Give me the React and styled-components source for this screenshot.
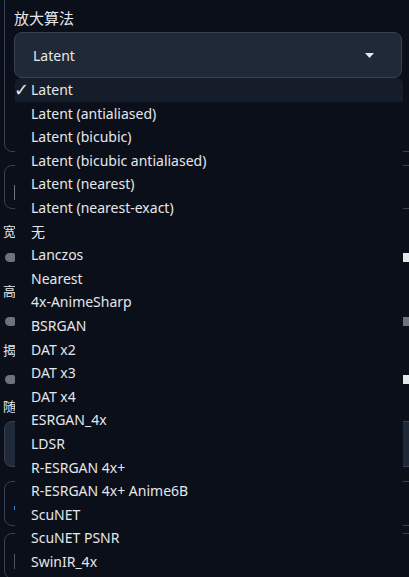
import React from "react";
import styled, { createGlobalStyle } from "styled-components";

const GlobalStyle = createGlobalStyle`
  html, body {
    margin: 0;
    padding: 0;
    background: #0b0f19;
  }
  body {
    font-family: "Noto Sans", "Noto Sans CJK SC", sans-serif;
  }
`;

const Page = styled.div`
  position: relative;
  width: 409px;
  height: 577px;
  overflow: hidden;
  background: #0b0f19;
  color: #e5e7eb;
  font-family: "Noto Sans", "Noto Sans CJK SC", sans-serif;
`;

const Column = styled.div`
  width: 440px;
  padding-left: 4px;
  display: flex;
  flex-direction: column;
`;

const Panel = styled.div`
  margin-top: -12px;
  height: 164px;
  box-sizing: border-box;
  border: 1px solid #374151;
  border-radius: 8px;
  padding: 20px 0 0 9px;
`;

const Label = styled.div`
  font-family: "Noto Sans CJK SC", sans-serif;
  font-size: 15px;
  line-height: 18px;
  color: #e5e7eb;
  margin-bottom: 5px;
`;

const Select = styled.div`
  width: 388px;
  height: 46px;
  box-sizing: border-box;
  border: 1px solid #374151;
  border-radius: 8px;
  background: #1f2937;
  display: flex;
  align-items: center;
  justify-content: space-between;
  padding: 0 27px 0 18px;
  font-size: 14px;
  color: #e5e7eb;
`;

const Caret = styled.svg`
  width: 9px;
  height: 5px;
`;

const Box = styled.div`
  height: ${(p) => p.h}px;
  margin-top: ${(p) => p.mt}px;
  box-sizing: border-box;
  border: 1px solid #374151;
  border-radius: 8px;
  background: ${(p) => (p.filled ? "#1f2937" : "transparent")};
  display: flex;
  align-items: center;
  padding-left: 9px;
`;

const Caretline = styled.div`
  width: 1px;
  height: 15px;
  margin-top: 10px;
  background: ${(p) => p.color};
`;

const Dot = styled.div`
  width: 2px;
  height: 4px;
  margin-top: 8px;
  background: #3b82f6;
`;

const RowLabel = styled.div`
  font-family: "Noto Sans CJK SC", sans-serif;
  font-size: 13px;
  line-height: 14px;
  height: 14px;
  color: #e5e7eb;
  margin-top: ${(p) => p.mt}px;
  margin-left: -1px;
`;

const SliderRow = styled.div`
  display: flex;
  align-items: center;
  justify-content: space-between;
  height: 10px;
  margin-top: ${(p) => p.mt}px;
  width: 409px;
`;

const Thumb = styled.div`
  width: 10px;
  height: 9px;
  margin-left: 1px;
  border-radius: 5px 2px 2px 5px;
  background: #6b7280;
`;

const NumBox = styled.div`
  width: 10px;
  height: 9px;
  background: ${(p) => p.color};
`;

const List = styled.ul`
  position: absolute;
  left: 15px;
  top: 78px;
  width: 388px;
  margin: 0;
  padding: 0;
  list-style: none;
  background: #0b0f19;
  border-radius: 6px 6px 0 0;
  overflow: hidden;
`;

const Item = styled.li`
  height: 23.6px;
  line-height: 23.6px;
  display: flex;
  align-items: center;
  font-size: 14px;
  color: #e5e7eb;
  background: ${(p) => (p.active ? "#151c2a" : "transparent")};
  white-space: nowrap;
`;

const Check = styled.span`
  width: 16px;
  flex: none;
  margin-left: -1px;
  margin-right: 1px;
  font-family: "DejaVu Sans", sans-serif;
  font-size: 18px;
  color: #e5e7eb;
`;

const ItemText = styled.span`
  font-family: "Noto Sans", "Noto Sans CJK SC", sans-serif;
`;

const options = [
  "Latent",
  "Latent (antialiased)",
  "Latent (bicubic)",
  "Latent (bicubic antialiased)",
  "Latent (nearest)",
  "Latent (nearest-exact)",
  "无",
  "Lanczos",
  "Nearest",
  "4x-AnimeSharp",
  "BSRGAN",
  "DAT x2",
  "DAT x3",
  "DAT x4",
  "ESRGAN_4x",
  "LDSR",
  "R-ESRGAN 4x+",
  "R-ESRGAN 4x+ Anime6B",
  "ScuNET",
  "ScuNET PSNR",
  "SwinIR_4x",
];

const App = () => {
  const selected = "Latent";

  return (
    <Page>
      <GlobalStyle />
      <Column>
        <Panel>
          <Label>放大算法</Label>
          <Select>
            <span>{selected}</span>
            <Caret viewBox="0 0 9 5">
              <path d="M0 0 H9 L4.5 5 Z" fill="#e5e7eb" />
            </Caret>
          </Select>
        </Panel>

        <Box h={44} mt={13}>
          <Caretline color="#6b7280" />
        </Box>

        <RowLabel mt={15}>宽度</RowLabel>
        <SliderRow mt={14}>
          <Thumb />
          <NumBox color="#e5e7eb" />
        </SliderRow>

        <RowLabel mt={22}>高度</RowLabel>
        <SliderRow mt={18}>
          <Thumb />
          <NumBox color="#6b7280" />
        </SliderRow>

        <RowLabel mt={17}>揭示</RowLabel>
        <SliderRow mt={17}>
          <Thumb />
          <NumBox color="#e5e7eb" />
        </SliderRow>

        <RowLabel mt={15}>随机</RowLabel>

        <Box h={46} mt={8} filled />
        <Box h={45} mt={14}>
          <Dot />
        </Box>
        <Box h={46} mt={7}>
          <Caretline color="#4b5563" />
        </Box>
      </Column>

      <List>
        {options.map((opt) => (
          <Item key={opt} active={opt === selected}>
            <Check>{opt === selected ? "✓" : ""}</Check>
            <ItemText>{opt}</ItemText>
          </Item>
        ))}
      </List>
    </Page>
  );
};

export default App;
